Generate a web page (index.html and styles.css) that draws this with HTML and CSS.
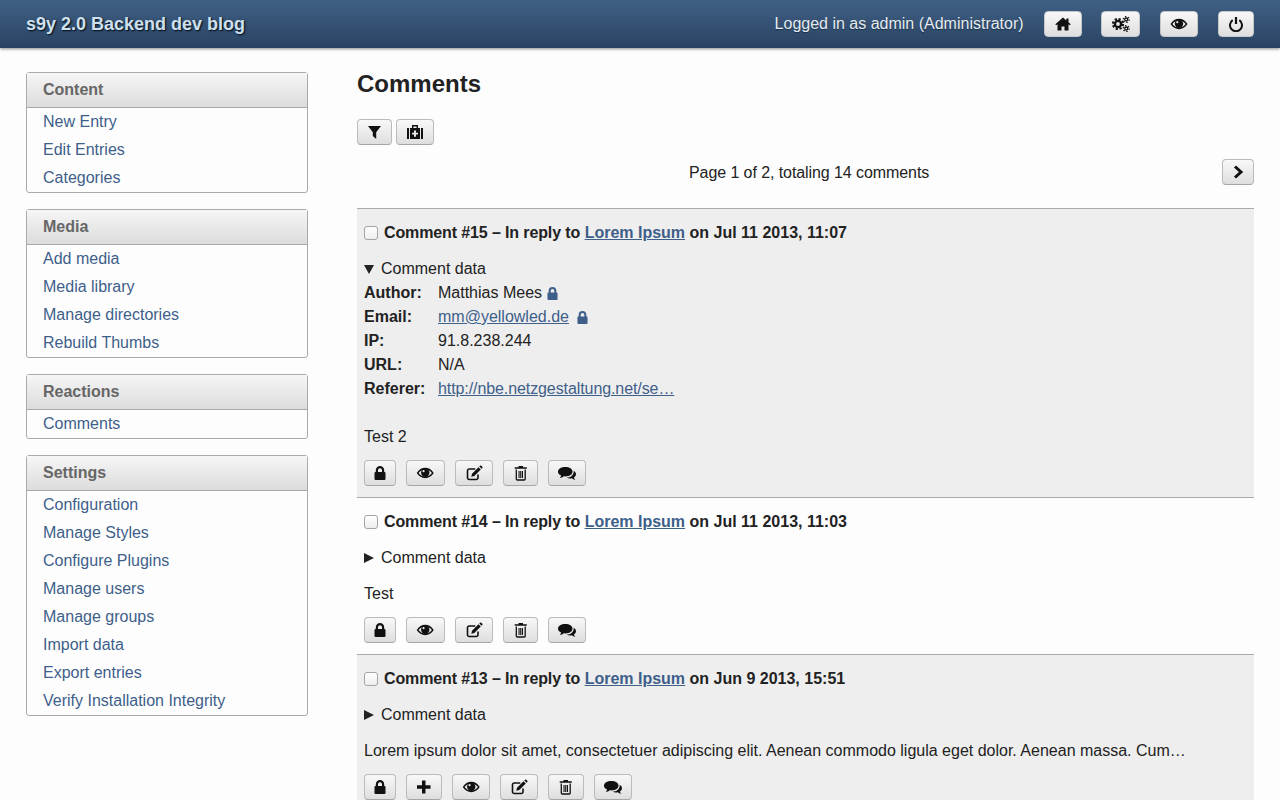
FILE: index.html
```html
<!DOCTYPE html>
<html lang="en">
<head>
<meta charset="utf-8">
<title>Comments | s9y 2.0 Backend dev blog</title>
<link rel="stylesheet" href="styles.css">
</head>
<body>
<svg class="sprite" xmlns="http://www.w3.org/2000/svg">
  <symbol id="i-home" viewBox="0 0 18 16"><path d="M9 1.500 1.300 8.200l.9 1.100 1.300-1.100v6.300h4v-4h3v4h4V8.200l1.300 1.100.9-1.100-2.200-1.900V2.500h-2.200v1.900z"/></symbol>
  <symbol id="i-cogs" viewBox="0 0 19 16">
    <g fill="none" stroke="currentColor"><circle cx="7" cy="8" r="3.100" stroke-width="2.400"/><circle cx="7" cy="8" r="5.100" stroke-width="2" stroke-dasharray="2.200 1.800"/><circle cx="15.200" cy="3.500" r="1.500" stroke-width="1.300"/><circle cx="15.200" cy="3.500" r="2.900" stroke-width="1.300" stroke-dasharray="1.300 1.740"/><circle cx="15.200" cy="12.500" r="1.500" stroke-width="1.300"/><circle cx="15.200" cy="12.500" r="2.900" stroke-width="1.300" stroke-dasharray="1.300 1.740"/></g>
  </symbol>
  <symbol id="i-eye" viewBox="0 0 18 16"><path fill-rule="evenodd" d="M.5 8C2.600 4.700 5.600 2.800 9 2.800s6.400 1.900 8.500 5.200c-2.100 3.300-5.100 5.200-8.500 5.200S2.600 11.300.5 8zm1.800 0c1.800 2.300 4 3.600 6.700 3.600s4.900-1.300 6.700-3.600C13.900 5.700 11.700 4.400 9 4.400S4.100 5.700 2.300 8z"/><circle cx="9" cy="7.800" r="4.200"/><circle cx="7.300" cy="6.200" r="1.100" fill="#e8e8e8"/></symbol>
  <symbol id="i-power" viewBox="0 0 16 16"><path fill="none" stroke="currentColor" stroke-width="2" d="M4.700 4.200a6 6 0 1 0 6.600 0"/><path fill="none" stroke="currentColor" stroke-width="2.200" d="M8 1v7"/></symbol>
  <symbol id="i-filter" viewBox="0 0 15 16"><path d="M1 2h13L9.200 8.200V15L5.800 12v-3.800z"/></symbol>
  <symbol id="i-medkit" viewBox="0 0 18 16"><path fill-rule="evenodd" d="M6 1h6v3h-1.400V2.400H7.400V4H6zM1 4h2v11H1zM15 4h2v11h-2zM4 4h10v11H4zM8 6.500v2.200H6v1.800h2v2.200h2v-2.200h2V8.700h-2V6.500z"/></symbol>
  <symbol id="i-lock" viewBox="0 0 12 16"><path fill="none" stroke="currentColor" stroke-width="2.200" d="M2.900 8V5.200a3.100 3.100 0 0 1 6.200 0V8"/><rect x=".5" y="7" width="11" height="8" rx="1"/></symbol>
  <symbol id="i-plus" viewBox="0 0 15.500 16"><path d="M6 1.500h3.500V6.300h5V9.700h-5v4.800H6V9.700H1V6.300h5z"/></symbol>
  <symbol id="i-edit" viewBox="0 0 18 16"><path fill="none" stroke="currentColor" stroke-width="1.600" d="M13 9.500v3.200a1.800 1.800 0 0 1-1.800 1.800H4.300a1.800 1.800 0 0 1-1.800-1.800V5.800A1.800 1.800 0 0 1 4.300 4h6"/><path d="M7 8.700 13.500 2.200l2.300 2.300-6.500 6.500-3 .7zM14.300 1.400l.7-.6a1 1 0 0 1 1.300 0l1 1a1 1 0 0 1 0 1.300l-.7.700z"/></symbol>
  <symbol id="i-trash" viewBox="0 0 15.500 16"><path d="M5.500 1h4.500v1.300h3.800v1.500H1.700V2.300h3.800z"/><path fill="none" stroke="currentColor" stroke-width="1.300" d="M3.300 4.500V14a1 1 0 0 0 1 1h6.900a1 1 0 0 0 1-1V4.500"/><path d="M5.500 6h1.100v7H5.500zM7.200 6h1.100v7H7.200zM8.900 6H10v7H8.900z"/></symbol>
  <symbol id="i-comments" viewBox="0 0 18 16"><path d="M7.500 2c3.900 0 7 2 7 4.700s-3.100 4.700-7 4.700c-.6 0-1.200 0-1.700-.1C4.600 12.300 3.200 12.800 1.800 13c.7-.7 1.200-1.500 1.300-2.500C1.200 9.600 0 8.300 0 6.700 0 4 3.100 2 7.500 2z"/><path d="M15.700 5.800c1.400.8 2.300 2 2.300 3.400 0 1.300-.8 2.400-2 3.200.1.900.6 1.700 1.300 2.500-1.300-.2-2.600-.7-3.700-1.600-1.700.4-3.500.2-5-.5 3.900-.1 7.100-2.700 7.100-6z"/></symbol>
  <symbol id="i-next" viewBox="0 0 12 16"><path fill="none" stroke="currentColor" stroke-width="3" d="M3 2.500 9 8l-6 5.500"/></symbol>
</svg>

<header class="topbar">
  <h1 class="blog-title">s9y 2.0 Backend dev blog</h1>
  <div class="topbar-right">
    <span class="user-state">Logged in as admin (Administrator)</span>
    <nav class="top-actions">
      <a class="btn" href="#"><svg class="ic w18"><use href="#i-home"/></svg></a>
      <a class="btn" href="#"><svg class="ic w19"><use href="#i-cogs"/></svg></a>
      <a class="btn" href="#"><svg class="ic w18"><use href="#i-eye"/></svg></a>
      <a class="btn" href="#"><svg class="ic w16"><use href="#i-power"/></svg></a>
    </nav>
  </div>
</header>

<div class="layout">
  <aside class="sidebar">
    <section class="menu">
      <h3 class="menu-title">Content</h3>
      <ul class="menu-list">
        <li><a href="#">New Entry</a></li>
        <li><a href="#">Edit Entries</a></li>
        <li><a href="#">Categories</a></li>
      </ul>
    </section>
    <section class="menu">
      <h3 class="menu-title">Media</h3>
      <ul class="menu-list">
        <li><a href="#">Add media</a></li>
        <li><a href="#">Media library</a></li>
        <li><a href="#">Manage directories</a></li>
        <li><a href="#">Rebuild Thumbs</a></li>
      </ul>
    </section>
    <section class="menu">
      <h3 class="menu-title">Reactions</h3>
      <ul class="menu-list">
        <li><a href="#">Comments</a></li>
      </ul>
    </section>
    <section class="menu">
      <h3 class="menu-title">Settings</h3>
      <ul class="menu-list">
        <li><a href="#">Configuration</a></li>
        <li><a href="#">Manage Styles</a></li>
        <li><a href="#">Configure Plugins</a></li>
        <li><a href="#">Manage users</a></li>
        <li><a href="#">Manage groups</a></li>
        <li><a href="#">Import data</a></li>
        <li><a href="#">Export entries</a></li>
        <li><a href="#">Verify Installation Integrity</a></li>
      </ul>
    </section>
  </aside>

  <main class="content">
    <h2 class="page-title">Comments</h2>
    <div class="tools">
      <a class="btn" href="#"><svg class="ic w15"><use href="#i-filter"/></svg></a>
      <a class="btn" href="#"><svg class="ic w18"><use href="#i-medkit"/></svg></a>
    </div>
    <div class="pagination">
      <span class="page-info">Page 1 of 2, totaling 14 comments</span>
      <a class="btn" href="#"><svg class="ic w12"><use href="#i-next"/></svg></a>
    </div>

    <article class="comment odd">
      <h4 class="comment-title"><input class="check" type="checkbox"><span><span class="lead">Comment #15 – In reply to</span> <a href="#">Lorem Ipsum</a> on Jul 11 2013, 11:07</span></h4>
      <details class="comment-data" open>
        <summary>Comment data</summary>
        <dl class="data-grid">
          <dt>Author:</dt><dd>Matthias Mees <svg class="ic lock-note"><use href="#i-lock"/></svg></dd>
          <dt>Email:</dt><dd class="wide"><a href="#">mm@yellowled.de</a> <svg class="ic lock-note"><use href="#i-lock"/></svg></dd>
          <dt>IP:</dt><dd>91.8.238.244</dd>
          <dt>URL:</dt><dd>N/A</dd>
          <dt>Referer:</dt><dd><a class="tight" href="#">http://nbe.netzgestaltung.net/se…</a></dd>
        </dl>
      </details>
      <p class="comment-body spaced">Test 2</p>
      <div class="actions">
        <a class="btn" href="#"><svg class="ic w12"><use href="#i-lock"/></svg></a>
        <a class="btn" href="#"><svg class="ic w18h"><use href="#i-eye"/></svg></a>
        <a class="btn" href="#"><svg class="ic w18"><use href="#i-edit"/></svg></a>
        <a class="btn" href="#"><svg class="ic w15h"><use href="#i-trash"/></svg></a>
        <a class="btn" href="#"><svg class="ic w18"><use href="#i-comments"/></svg></a>
      </div>
    </article>

    <article class="comment">
      <h4 class="comment-title"><input class="check" type="checkbox"><span><span class="lead">Comment #14 – In reply to</span> <a href="#">Lorem Ipsum</a> on Jul 11 2013, 11:03</span></h4>
      <details class="comment-data">
        <summary>Comment data</summary>
      </details>
      <p class="comment-body">Test</p>
      <div class="actions">
        <a class="btn" href="#"><svg class="ic w12"><use href="#i-lock"/></svg></a>
        <a class="btn" href="#"><svg class="ic w18h"><use href="#i-eye"/></svg></a>
        <a class="btn" href="#"><svg class="ic w18"><use href="#i-edit"/></svg></a>
        <a class="btn" href="#"><svg class="ic w15h"><use href="#i-trash"/></svg></a>
        <a class="btn" href="#"><svg class="ic w18"><use href="#i-comments"/></svg></a>
      </div>
    </article>

    <article class="comment odd">
      <h4 class="comment-title"><input class="check" type="checkbox"><span><span class="lead">Comment #13 – In reply to</span> <a href="#">Lorem Ipsum</a> on Jun 9 2013, 15:51</span></h4>
      <details class="comment-data">
        <summary>Comment data</summary>
      </details>
      <p class="comment-body">Lorem ipsum dolor sit amet, consectetuer adipiscing elit. Aenean commodo ligula eget dolor. Aenean massa. Cum…</p>
      <div class="actions">
        <a class="btn" href="#"><svg class="ic w12"><use href="#i-lock"/></svg></a>
        <a class="btn" href="#"><svg class="ic w15h"><use href="#i-plus"/></svg></a>
        <a class="btn" href="#"><svg class="ic w18h"><use href="#i-eye"/></svg></a>
        <a class="btn" href="#"><svg class="ic w18"><use href="#i-edit"/></svg></a>
        <a class="btn" href="#"><svg class="ic w15h"><use href="#i-trash"/></svg></a>
        <a class="btn" href="#"><svg class="ic w18"><use href="#i-comments"/></svg></a>
      </div>
    </article>
  </main>
</div>
</body>
</html>
```

FILE: styles.css
```css
* { box-sizing: border-box; }

html, body {
  height: 800px;
  overflow: hidden;
}

body {
  margin: 0;
  background: #fdfdfd;
  color: #222;
  font: 16px/24px "Liberation Sans", Arial, sans-serif;
}

a { color: #3e5f8a; }

.sprite {
  display: block;
  width: 0;
  height: 0;
}

/* Top bar */
.topbar {
  display: flex;
  align-items: center;
  justify-content: space-between;
  height: 48px;
  padding: 0 26px;
  background: linear-gradient(#3f6085, #2a4362);
  box-shadow: 0 1px 3px rgba(0, 0, 0, .45);
}

.blog-title {
  margin: 0;
  font-size: 18px;
  font-weight: bold;
  color: #cfe0ee;
  text-shadow: 1px 1px 1px #0e1a2a, 1px 1px 2px #16263a;
}

.topbar-right {
  display: flex;
  align-items: center;
  gap: 20px;
}

.user-state {
  color: #e4ebf2;
  text-shadow: 0 1px 1px rgba(0, 0, 0, .4);
}

.top-actions {
  display: flex;
  gap: 19.8px;
}

/* Buttons */
.btn {
  display: inline-flex;
  align-items: center;
  justify-content: center;
  height: 26px;
  padding: 0 9px;
  color: #111;
  background: linear-gradient(#f8f8f8, #dedede);
  border: 1px solid #bbb;
  border-bottom-color: #a6a6a6;
  border-radius: 4px;
}

.topbar .btn { border-color: #c4c8cc; }

.ic {
  display: block;
  width: 16px;
  height: 16px;
  fill: currentColor;
}

.w12 { width: 12px; }
.w15 { width: 15px; }
.w15h { width: 15.5px; }
.w16 { width: 16px; }
.w18 { width: 18px; }
.w18h { width: 18.5px; }
.w19 { width: 19px; }

/* Layout */
.layout {
  display: flex;
  gap: 49px;
  padding: 24px 26px 0;
}

.sidebar {
  flex: 0 0 282px;
  display: flex;
  flex-direction: column;
  gap: 16px;
}

.menu {
  background: #fdfdfd;
  border: 1px solid #aaa;
  border-radius: 3px;
}

.menu-title {
  margin: 0;
  height: 35px;
  padding: 5px 16px 0;
  font-size: 16px;
  color: #666;
  background: linear-gradient(#f6f6f6, #dcdcdc);
  border-bottom: 1px solid #aaa;
}

.menu-list {
  margin: 0;
  padding: 0;
  list-style: none;
}

.menu-list li {
  height: 28px;
  padding: 1px 16px 0;
  line-height: 26px;
}

.menu-list a { text-decoration: none; }

/* Content */
.content {
  flex: 1;
  min-width: 0;
}

.page-title {
  margin: 0 0 23px;
  font-size: 24px;
  line-height: 24px;
  color: #222;
}

.tools {
  display: flex;
  gap: 4px;
}

.pagination {
  display: flex;
  align-items: center;
  margin: 14px 0 23px;
  padding-left: 332px;
}

.page-info {
  flex: 1;
  padding-top: 2px;
  letter-spacing: -.08px;
}

.comment {
  padding: 12px 7px 11px;
  border-top: 1px solid #aaa;
}

.odd { background: #eee; }

.comment-title {
  display: flex;
  align-items: center;
  gap: 6px;
  margin: 0;
  font-size: 16px;
  line-height: 24px;
}

.lead { letter-spacing: -.12px; }

.check {
  appearance: none;
  flex: none;
  width: 14px;
  height: 14px;
  margin: 0 0 1px;
  background: linear-gradient(#fff, #eee);
  border: 1px solid #a4a4a4;
  border-radius: 3px;
}

.comment-data { margin-top: 12px; }

.comment-data summary {
  display: flex;
  align-items: center;
  gap: 7px;
  list-style: none;
}

.comment-data summary::-webkit-details-marker { display: none; }

.comment-data summary::before {
  content: "";
  width: 0;
  height: 0;
  border-style: solid;
  border-width: 5px 0 5px 10px;
  border-color: transparent transparent transparent #222;
}

.comment-data[open] summary::before {
  border-width: 9px 5px 0;
  border-color: #222 transparent transparent;
}

.data-grid {
  display: grid;
  grid-template-columns: 74px 1fr;
  margin: 0;
}

.data-grid dt { font-weight: bold; }

.data-grid dd {
  display: flex;
  align-items: center;
  gap: 5px;
  margin: 0;
}

.data-grid dd.wide { gap: 8px; }

.tight { letter-spacing: -.09px; }

.lock-note {
  width: 11px;
  height: 15px;
  color: #3e5f8a;
}

.comment-body { margin: 12px 0 0; }
.comment-body.spaced { margin-top: 24px; }

.actions {
  display: flex;
  gap: 10px;
  margin-top: 11px;
}
```
